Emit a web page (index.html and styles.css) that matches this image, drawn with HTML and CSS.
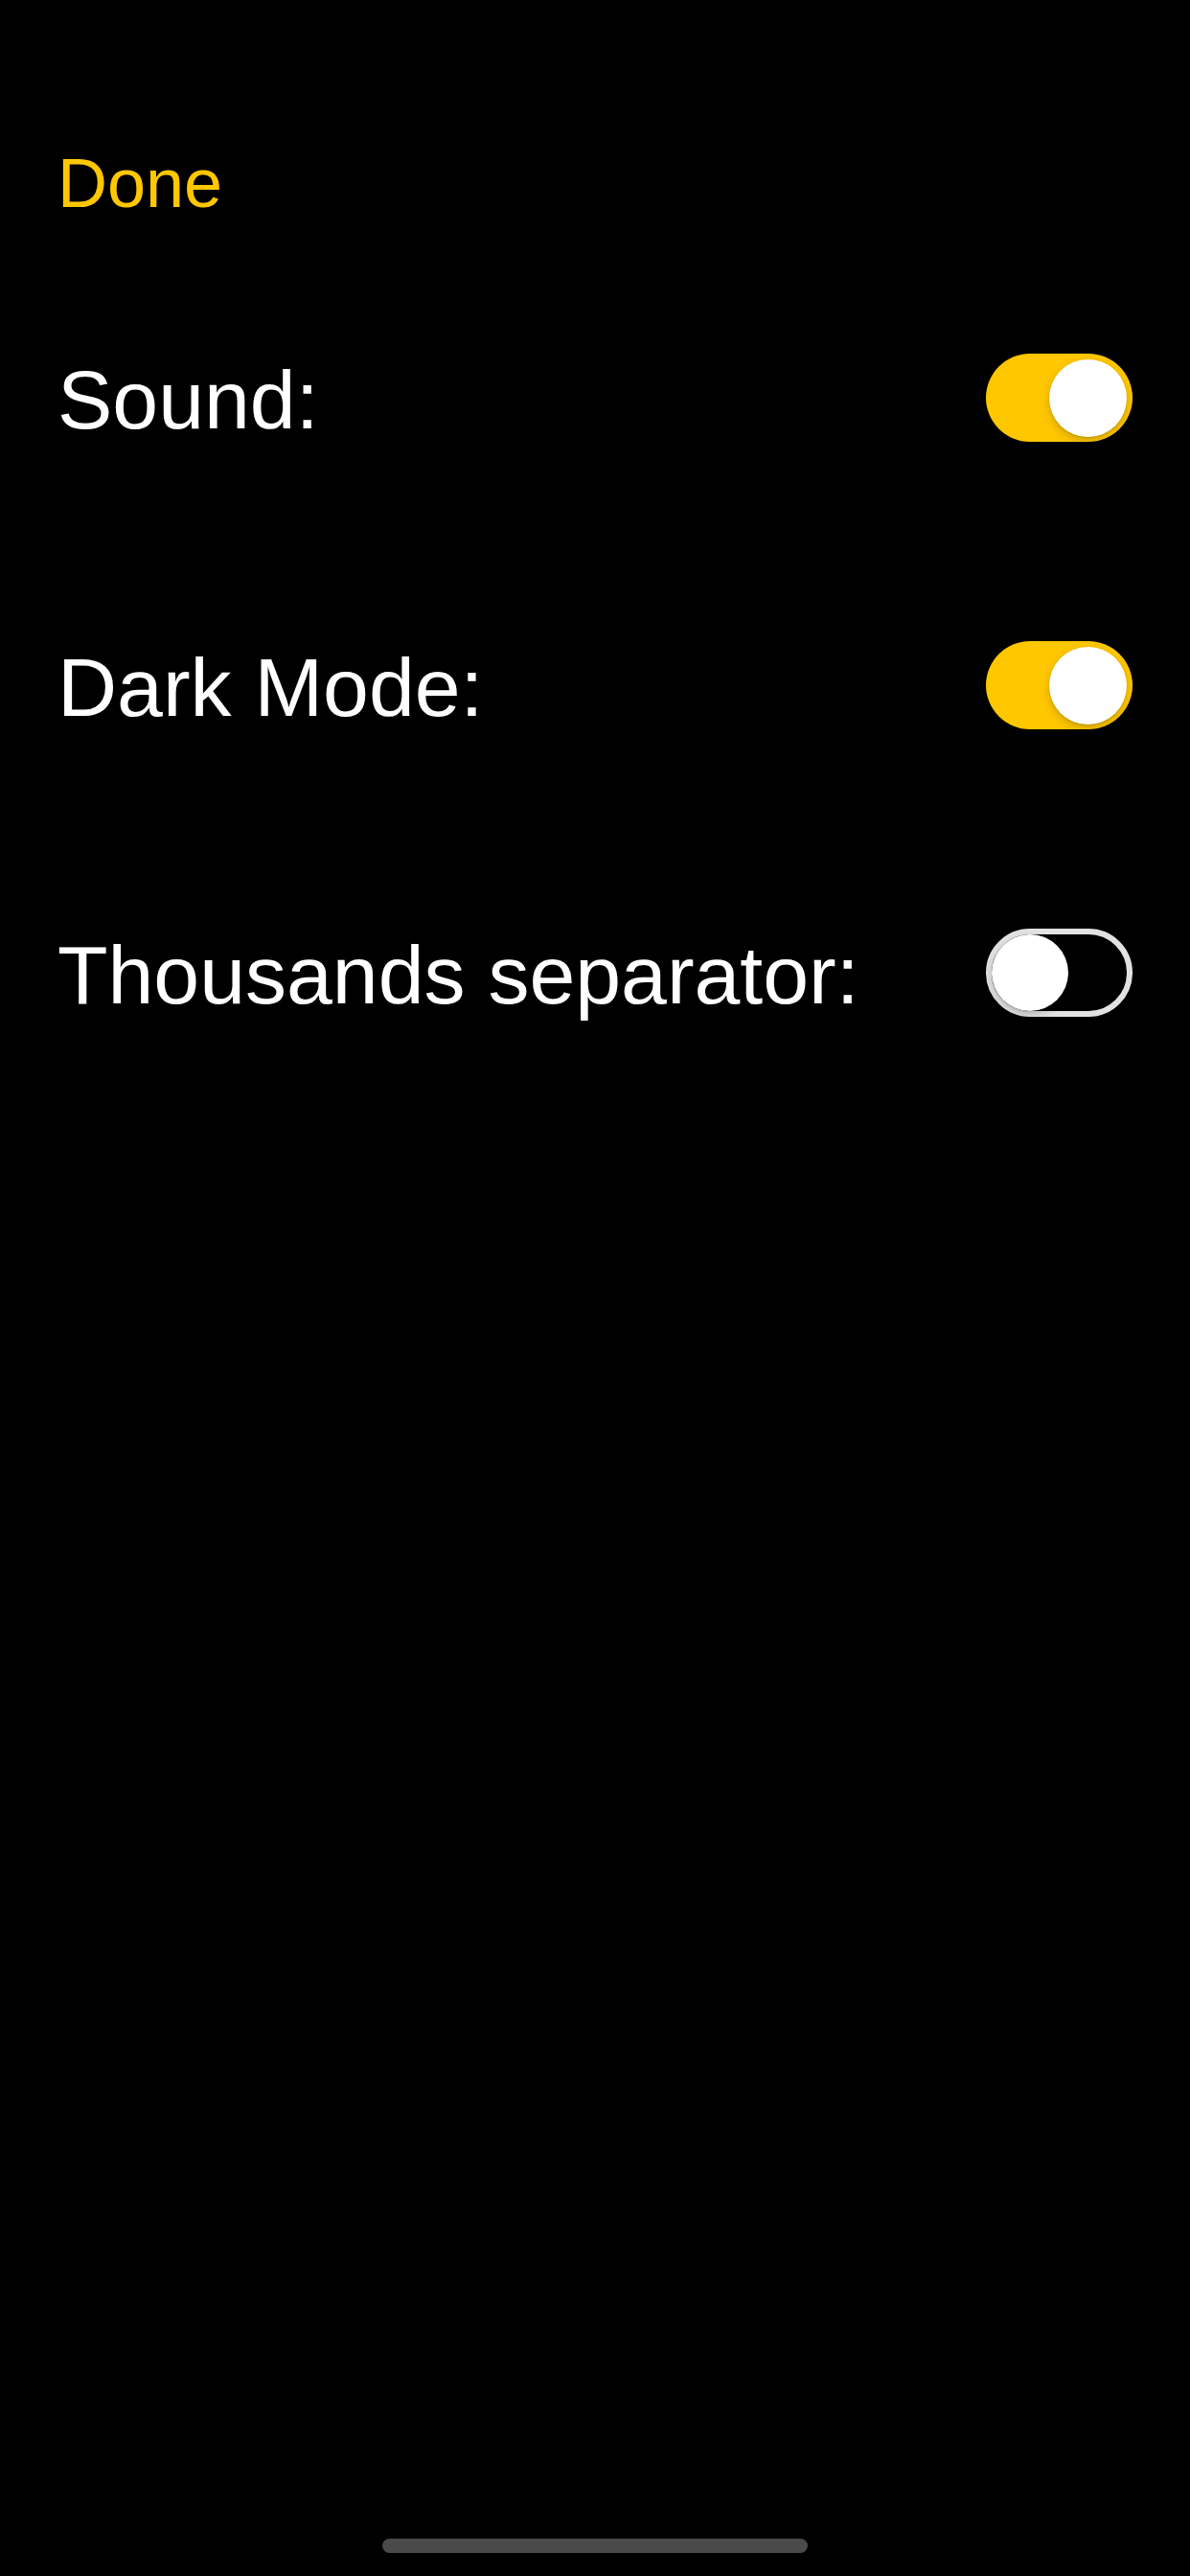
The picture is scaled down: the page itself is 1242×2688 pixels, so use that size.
FILE: index.html
```html
<!DOCTYPE html>
<html lang="en">
<head>
<meta charset="utf-8">
<title>Settings</title>
<link rel="stylesheet" href="styles.css">
</head>
<body>
<div class="screen">
  <div class="done">Done</div>
  <div class="rows">
    <div class="row">
      <span class="label">Sound:</span>
      <span class="switch on"><span class="knob"></span></span>
    </div>
    <div class="row">
      <span class="label">Dark Mode:</span>
      <span class="switch on"><span class="knob"></span></span>
    </div>
    <div class="row">
      <span class="label">Thousands separator:</span>
      <span class="switch off"><span class="knob"></span></span>
    </div>
  </div>
  <div class="spacer"></div>
  <div class="home-bar"></div>
</div>
</body>
</html>
```

FILE: styles.css
```css
html, body {
  margin: 0;
  padding: 0;
  background: #000;
}
.screen {
  width: 1242px;
  height: 2688px;
  box-sizing: border-box;
  padding: 149px 60px 0 60px;
  display: flex;
  flex-direction: column;
  font-family: "Liberation Sans", Arial, sans-serif;
  color: #fff;
}
.done {
  font-size: 72px;
  line-height: 84px;
  color: #ffc700;
}
.rows {
  margin-top: 136px;
  display: flex;
  flex-direction: column;
  gap: 208px;
}
.row {
  display: flex;
  align-items: center;
  justify-content: space-between;
  height: 92px;
}
.label {
  font-size: 86px;
  line-height: 86px;
  padding-top: 4px;
}
.switch {
  position: relative;
  width: 153px;
  height: 92px;
  border-radius: 46px;
  box-sizing: border-box;
  flex: none;
}
.switch.on {
  background: #ffc700;
}
.switch.off {
  background: #000;
  border: 6px solid #e2e2e2;
}
.knob {
  position: absolute;
  width: 81px;
  height: 81px;
  border-radius: 50%;
  background: #fff;
  box-shadow: 0 4px 10px rgba(0,0,0,0.18), 0 1px 2px rgba(0,0,0,0.12);
}
.switch.on .knob {
  top: 6px;
  right: 6px;
}
.switch.off .knob {
  top: 0;
  left: 0;
  width: 80px;
  height: 80px;
}
.spacer {
  flex: 1;
}
.home-bar {
  align-self: center;
  width: 444px;
  height: 15px;
  border-radius: 8px;
  background: #4a4a4a;
  margin-bottom: 24px;
}
```
